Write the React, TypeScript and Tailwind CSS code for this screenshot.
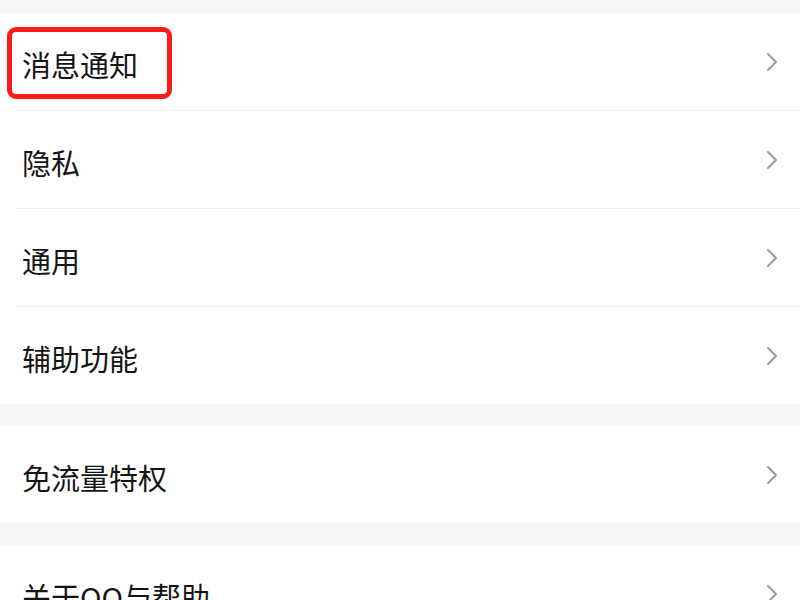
import React from 'react';

interface Row {
  label: string;
}

const groups: Row[][] = [
  [{ label: '消息通知' }, { label: '隐私' }, { label: '通用' }, { label: '辅助功能' }],
  [{ label: '免流量特权' }],
  [{ label: '关于QQ与帮助' }],
];

const Chevron: React.FC = () => (
  <svg width="12" height="20" viewBox="0 0 12 20" fill="none" className="shrink-0">
    <path d="M2 2 L10 10 L2 18" stroke="#9a9a9a" strokeWidth="2" strokeLinecap="round" strokeLinejoin="round" />
  </svg>
);

const App: React.FC = () => {
  return (
    <div
      className="w-[800px] h-[600px] overflow-hidden bg-[#f6f6f8] pt-[13px] text-[#141414]"
      style={{ fontFamily: '"Noto Sans CJK SC", "Noto Sans", sans-serif' }}
    >
      <div className="flex flex-col gap-[22px]">
        {groups.map((group, gi) => (
          <div key={gi} className="bg-white flex flex-col">
            {group.map((row, ri) => (
              <div key={row.label} className="relative">
                <div className="flex items-center h-[97px] pl-[22px] pr-[22px]">
                  <span className="text-[29px] leading-none flex-1 pt-[6px]">{row.label}</span>
                  <Chevron />
                </div>
                {ri < group.length - 1 && <div className="ml-[17px] h-px bg-[#ececec]" />}
                {gi === 0 && ri === 0 && (
                  <div className="absolute left-[7px] top-[14px] w-[165px] h-[72px] border-[5px] border-[#ff1a1a] rounded-[9px]" />
                )}
              </div>
            ))}
          </div>
        ))}
      </div>
    </div>
  );
};

export default App;
